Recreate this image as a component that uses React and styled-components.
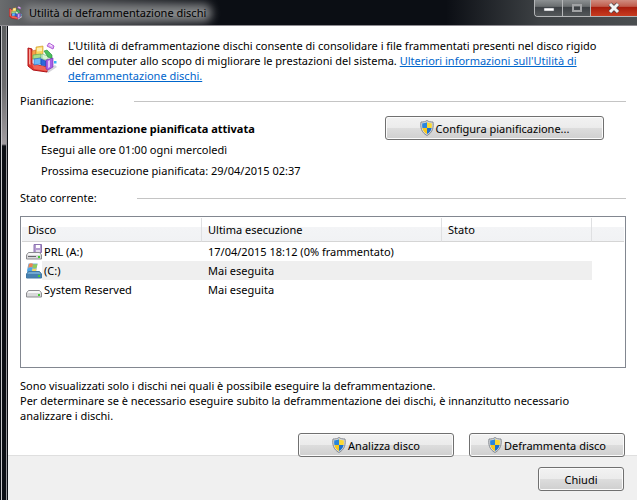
import React from 'react';
import styled, {createGlobalStyle} from 'styled-components';

const drives = [
    {name: 'PRL (A:)', lastRun: '17/04/2015 18:12 (0% frammentato)', kind: 'floppy'},
    {name: '(C:)', lastRun: 'Mai eseguita', kind: 'system', selected: true},
    {name: 'System Reserved', lastRun: 'Mai eseguita', kind: 'disk'},
];

const DefragIcon = ({size}) => (
    <svg width={size} height={size} viewBox="0 0 32 32" aria-hidden="true">
        <path d="M18 29l10-6 2 2-9 6z" fill="#d4d4da"/>
        <path d="M1 6l4 1v15l15 3v5L6 28l-5-4z" fill="#e23a30" stroke="#b01418"/>
        <path d="M5 22l15 3v4L7 27z" fill="#f06458"/>
        <path d="M2 7l1.500.5V23L2 22z" fill="#f8a49c"/>
        <path d="M5 9l4-1v8l-4 1z" fill="#f6a04c" stroke="#cc5a20" strokeWidth=".6"/>
        <path d="M9 5l7-1v8l-7 1z" fill="#fbd45c" stroke="#c89428" strokeWidth=".6"/>
        <path d="M10 6l5-.5V9l-5 .5z" fill="#fdeeb0"/>
        <path d="M6 13l8-1v4l-8 1z" fill="#a8dc88" stroke="#4ca858" strokeWidth=".6"/>
        <path d="M15 12l6 2v4l-6-1z" fill="#dcf4d4" stroke="#6cb878" strokeWidth=".6"/>
        <path d="M17 9l3-1 5 5v4l-4-2z" fill="#4cc05c" stroke="#208838" strokeWidth=".6"/>
        <path d="M7 17l7-1v6l-7 1z" fill="#6cb8f8" stroke="#2468c0" strokeWidth=".6"/>
        <path d="M14 17l5 2v5l-5-1z" fill="#2c68dc" stroke="#1844a4" strokeWidth=".6"/>
        <path d="M19 18l7-2v9l-5 3-2-1z" fill="#a860e4" stroke="#7028b0" strokeWidth=".6"/>
        <path d="M21 19l2-1v7l-2 1z" fill="#e4c4fa"/>
        <path d="M20 4l2-3 5 3-1 3z" fill="#e0b0f4" stroke="#b060d8"/>
        <path d="M22.500 2.500l2.500 1.500" stroke="#fff"/>
        <path d="M27 19h2.500v2.500H27z" fill="#38b4f4"/>
    </svg>
);

const ShieldIcon = () => (
    <svg width="14" height="16" viewBox="0 0 14 16" aria-hidden="true">
        <path d="M7 .5C5.500 1.700 3.500 2 1 2c-.8 5 .2 10.500 6 13.500C12.800 12.500 13.800 7 13 2 10.500 2 8.500 1.700 7 .5z" fill="#d8dade" stroke="#858a90"/>
        <path d="M7 2.200C5.600 3 4 3.300 2.300 3.300c-.3 1.700-.2 3.200.1 4.700H7z" fill="#2a86dc"/>
        <path d="M7 2.200c1.400.8 3 1.100 4.700 1.100.3 1.700.2 3.200-.1 4.700H7z" fill="#fbd932"/>
        <path d="M2.400 8c.6 2.700 2 4.700 4.600 6V8z" fill="#f8c81c"/>
        <path d="M11.600 8c-.6 2.700-2 4.700-4.600 6V8z" fill="#1c70cc"/>
    </svg>
);

const DriveIcon = ({kind}) => (
    <svg width="16" height="16" viewBox="0 0 16 16" aria-hidden="true">
        {kind === 'floppy' && (
            <g>
                <path d="M8 .5h7.500v8H8z" fill="#b49cd0" stroke="#8c74b0"/>
                <path d="M10 1h4v3h-4z" fill="#fff"/>
                <path d="M10 6h4v2h-4z" fill="#e4dcf0"/>
            </g>
        )}
        {kind === 'system' && (
            <g>
                <path d="M1 7L2.500 .5h9L10 9H1z" fill="#74b0dc"/>
                <path d="M3 1c1.500-1 2.500-.8 4-.2L6.300 4.500c-1.500-.6-2.600-.5-4 .4z" fill="#ec8450"/>
                <path d="M7.300 1c1.500.6 2.700.6 4.200-.3L10.700 4.500c-1.400.8-2.700.8-4.100.2z" fill="#90cc58"/>
                <path d="M2.100 5.500c1.400-.8 2.500-.8 4-.2L5.500 8.500H1.400z" fill="#4ca4e4"/>
                <path d="M6.500 5.400c1.500.6 2.600.6 4.100-.2L9.800 8.500H5.900z" fill="#f8d860"/>
            </g>
        )}
        <path
            d="M2.500 8.500h11l2 2.500v4h-15v-4z"
            fill={kind === 'system' ? '#4680b0' : '#d8d8da'}
            stroke={kind === 'system' ? '#4078a4' : '#8c8c90'}
        />
        <path d="M2.800 9h10.400l1.500 2H1.300z" fill={kind === 'system' ? '#70a8d0' : '#f6f6f7'}/>
        {kind === 'floppy' && <path d="M2 12.500h8" stroke="#66666c"/>}
        <path d="M12 12h2v2h-2z" fill="#44cc34"/>
    </svg>
);

const App = () => (
    <Window>
        <GlobalStyle/>
        <TitleBar>
            <DefragIcon size={14}/>
            <Title>Utilità di deframmentazione dischi</Title>
            <Caption>
                <CaptionButton aria-label="Riduci a icona">
                    <svg width="12" height="12" viewBox="0 0 12 12">
                        <path d="M1 6h10v3H1z" fill="#fff" stroke="#555a60" strokeWidth=".5"/>
                    </svg>
                </CaptionButton>
                <CaptionButton aria-label="Ingrandisci" disabled>
                    <svg width="12" height="12" viewBox="0 0 12 12">
                        <path d="M2 3h8v6H2z" fill="none" stroke="#a0a2a4" strokeWidth="2"/>
                    </svg>
                </CaptionButton>
                <CaptionButton aria-label="Chiudi finestra" $close>
                    <svg width="12" height="12" viewBox="0 0 12 12">
                        <path d="M2 2l8 8M10 2l-8 8" stroke="#4c4448" strokeWidth="4.500"/>
                        <path d="M2 2l8 8M10 2l-8 8" stroke="#f4f4f4" strokeWidth="3"/>
                    </svg>
                </CaptionButton>
            </Caption>
        </TitleBar>
        <Body>
            <Frame/>
            <Client>
                <Content>
                    <Intro>
                        <DefragIcon size={32}/>
                        <p>
                            L'Utilità di deframmentazione dischi consente di consolidare i file frammentati presenti nel
                            disco rigido del computer allo scopo di migliorare le prestazioni del sistema.{' '}
                            <Link href="#info">Ulteriori informazioni sull'Utilità di deframmentazione dischi.</Link>
                        </p>
                    </Intro>
                    <GroupTitle>Pianificazione:</GroupTitle>
                    <Schedule>
                        <div>
                            <ScheduleName>Deframmentazione pianificata attivata</ScheduleName>
                            <ScheduleLine>Esegui alle ore 01:00 ogni mercoledì</ScheduleLine>
                            <ScheduleLine>Prossima esecuzione pianificata: 29/04/2015 02:37</ScheduleLine>
                        </div>
                        <Button $width={219}><ShieldIcon/>Configura pianificazione...</Button>
                    </Schedule>
                    <GroupTitle>Stato corrente:</GroupTitle>
                    <ListBox>
                        <Table>
                            <colgroup>
                                <col width="180"/>
                                <col width="240"/>
                                <col width="150"/>
                                <col/>
                            </colgroup>
                            <thead>
                                <tr>
                                    <Th>Disco</Th>
                                    <Th>Ultima esecuzione</Th>
                                    <Th>Stato</Th>
                                    <Th as="td"/>
                                </tr>
                            </thead>
                            <tbody>
                                {drives.map((drive) => (
                                    <Row key={drive.name} $selected={drive.selected}>
                                        <td>
                                            <Drive>
                                                <DriveIcon kind={drive.kind}/>
                                                <DriveName>{drive.name}</DriveName>
                                            </Drive>
                                        </td>
                                        <td>{drive.lastRun}</td>
                                        <td/>
                                    </Row>
                                ))}
                            </tbody>
                        </Table>
                    </ListBox>
                    <Note>
                        Sono visualizzati solo i dischi nei quali è possibile eseguire la deframmentazione.<br/>
                        Per determinare se è necessario eseguire subito la deframmentazione dei dischi, è innanzitutto
                        necessario analizzare i dischi.
                    </Note>
                    <Actions>
                        <Button $width={156}><ShieldIcon/>Analizza disco</Button>
                        <Button $width={156}><ShieldIcon/>Deframmenta disco</Button>
                    </Actions>
                </Content>
                <Footer>
                    <Button $width={86}>Chiudi</Button>
                </Footer>
            </Client>
        </Body>
    </Window>
);

const GlobalStyle = createGlobalStyle`
  * {
    box-sizing: border-box;
  }
  body {
    margin: 0;
    font-family: "Noto Sans", "Open Sans", sans-serif;
    font-size: 11px;
    line-height: 15px;
    color: #000;
  }
  p {
    margin: 0;
  }
  svg {
    flex: none;
    display: block;
  }
  button {
    font: inherit;
    color: inherit;
  }
`;

const Window = styled.div`
  min-height: 100vh;
  display: flex;
  flex-direction: column;
  background: #0b0e14;
`;

const TitleBar = styled.header`
  height: 26px;
  display: flex;
  align-items: center;
  padding-left: 9px;
  border-bottom: 1px solid #8e8c92;
  background: linear-gradient(90deg, #6a6c6e 0, #4c4e52 40px, #0b0e14 220px, #0b0e14 70%, #3e4245 85%, #4a4e50);
`;

const Title = styled.h1`
  margin: 0 auto 0 6px;
  font-size: 11px;
  line-height: 6px;
  font-weight: 400;
  background: #808284;
  border-radius: 3px;
  box-shadow: 0 0 8px 6px #808284;
`;

const Caption = styled.div`
  align-self: flex-start;
  display: flex;
  height: 17px;
  border: 1px solid #b4b6b8;
  border-width: 0 0 1px 1px;
  border-radius: 0 0 0 4px;
  overflow: hidden;
`;

const CaptionButton = styled.button`
  width: ${({$close}) => $close ? 46 : 28}px;
  padding: 0;
  display: flex;
  align-items: center;
  justify-content: center;
  border: 0;
  border-right: ${({$close}) => $close ? 0 : 1}px solid #b4b6b8;
  background: ${({$close}) => $close
    ? 'linear-gradient(#d08c80 0, #c05c4c 40%, #a81c0c 45%, #c83c20)'
    : 'linear-gradient(#8c9092 0, #6a6e70 40%, #3c4044 45%, #54585a)'};
`;

const Body = styled.div`
  flex: 1;
  display: flex;
`;

const Frame = styled.div`
  width: 8px;
  border: 1px solid #0b0e14;
  border-width: 0 1px;
  background:
    linear-gradient(90deg, #c4c4c8 1px, transparent 1px, transparent 5px, #98989c 5px),
    linear-gradient(#5c5e60 0, #6c6c6e 60px, #a09ca0 118px, #0b0e14 120px);
`;

const Client = styled.main`
  flex: 1;
  min-width: 0;
  display: flex;
  flex-direction: column;
  background: #fff;
`;

const Content = styled.div`
  padding: 12px 11px 0 12px;
`;

const Intro = styled.div`
  display: flex;
  gap: 9px;
  padding: 0 20px 0 7px;
  margin-bottom: 10px;

  svg {
    margin-top: 4px;
  }
`;

const Link = styled.a`
  color: #0066cc;
`;

const GroupTitle = styled.h2`
  display: flex;
  align-items: center;
  gap: 40px;
  margin: 0;
  font-size: inherit;
  font-weight: 400;

  &::after {
    content: '';
    flex: 1;
    height: 1px;
    margin-top: 2px;
    background: #c4c4c4;
  }
`;

const Schedule = styled.div`
  display: flex;
  justify-content: space-between;
  align-items: flex-start;
  padding: 8px 22px 0 21px;
  margin-bottom: 12px;
`;

const ScheduleName = styled.p`
  margin-top: 5px;
  font-weight: 700;
`;

const ScheduleLine = styled.p`
  margin-top: 6px;
`;

const Button = styled.button`
  width: ${({$width}) => $width}px;
  height: 24px;
  display: flex;
  align-items: center;
  justify-content: center;
  gap: 2px;
  padding: 0;
  border: 1px solid #707070;
  border-radius: 3px;
  background: linear-gradient(#f2f2f2 0, #ebebeb 50%, #dddddd 50%, #cfcfcf);
  box-shadow: inset 0 0 0 1px #fbfbfb;
`;

const ListBox = styled.div`
  height: 152px;
  margin-top: 11px;
  padding: 1px;
  border: 1px solid #828790;
`;

const Table = styled.table`
  width: 100%;
  table-layout: fixed;
  border-collapse: separate;
  border-spacing: 0;

  td {
    padding: 0 0 0 6px;
  }
`;

const Th = styled.th`
  height: 24px;
  padding: 0 0 0 6px;
  text-align: left;
  font-weight: 400;
  border-right: 1px solid #dfe0e2;
  border-bottom: 1px solid #d5d5d5;
  background: linear-gradient(#fff 40%, #f3f4f6 40%, #f1f2f4);

  &:last-child {
    border-right: 0;
  }
`;

const Row = styled.tr`
  height: 19px;

  td {
    background: ${({$selected}) => $selected ? '#efefef' : '#fff'};
  }
  td:first-child {
    padding-left: 4px;
    background: ${({$selected}) => $selected ? 'linear-gradient(90deg, #fff 20px, #efefef 20px)' : '#fff'};
  }
`;

const Drive = styled.div`
  display: flex;
  align-items: center;
`;

const DriveName = styled.span`
  padding-left: 2px;
`;

const Note = styled.p`
  margin-top: 10px;
  padding-right: 30px;
`;

const Actions = styled.div`
  position: relative;
  display: flex;
  justify-content: flex-end;
  gap: 15px;
  margin: 10px 1px -2px;
`;

const Footer = styled.footer`
  flex: 1;
  display: flex;
  justify-content: flex-end;
  align-items: flex-start;
  padding: 11px 13px 9px;
  border-top: 1px solid #dfdfdf;
  background: #f0f0f0;
`;

export default App;
